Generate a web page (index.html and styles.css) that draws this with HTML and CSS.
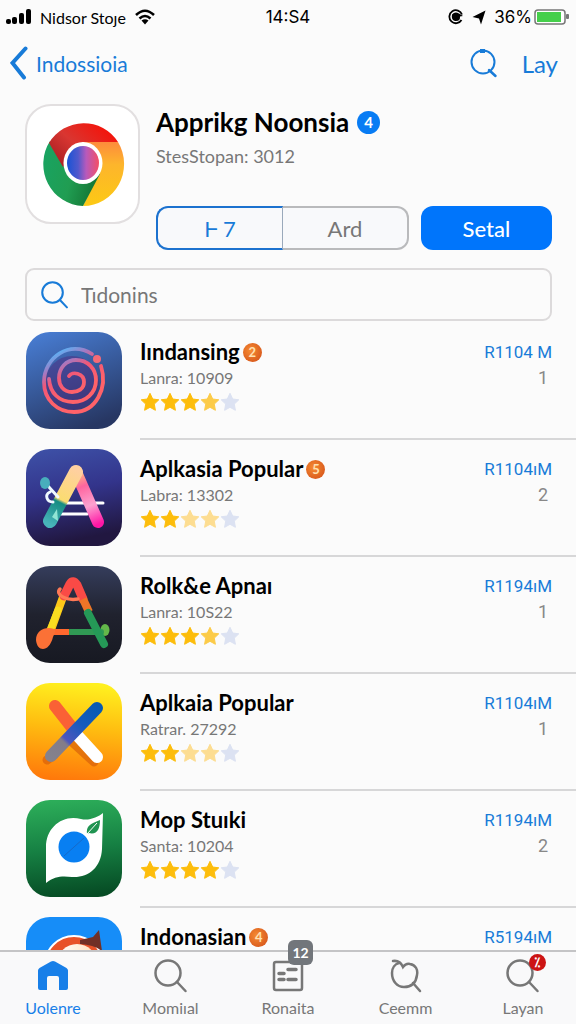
FILE: index.html
```html
<!DOCTYPE html>
<html lang="id">

<head>
  <meta charset="UTF-8" />
  <meta name="viewport" content="width=device-width, initial-scale=1.0" />
  <title>Indossioia</title>
  <link rel="stylesheet" href="styles.css">
</head>

<body>
  <!-- shared shapes -->
  <svg class="defs" aria-hidden="true">
    <symbol id="star" viewBox="0 0 20 20">
      <path d="M10 1.3l2.7 5.7 6.1.8-4.5 4.3 1.1 6.2-5.4-3-5.4 3 1.1-6.2L1.2 7.800l6.100-.8z" fill="currentColor" stroke="currentColor" stroke-linejoin="round" />
    </symbol>
    <symbol id="search" viewBox="0 0 34 34">
      <g fill="none" stroke="currentColor" stroke-linecap="round">
        <circle cx="14" cy="14" r="12.500" />
        <path d="M23 23l8.500 9" />
      </g>
    </symbol>
  </svg>

  <div class="status-bar">
    <div class="status-left">
      <svg width="26" height="16" viewBox="0 0 26 16">
        <rect x="0" y="10" width="5" height="5" rx="2" />
        <rect x="6" y="8" width="5" height="7" rx="2" />
        <rect x="13" y="4" width="5" height="11" rx="2" />
        <rect x="20" y="0" width="5" height="15" rx="2" />
      </svg>
      <span class="carrier">Nidsor Stoȷe</span>
      <svg width="22" height="16" viewBox="0 0 22 16">
        <path d="M2 6Q11-2.500 20 6M5.500 9.500q5.500-5 11 0" fill="none" stroke="#000" stroke-width="2.600" />
        <path d="M7.500 11.500q3.500-2.500 7 0L11 15.500z" />
      </svg>
    </div>
    <div class="time">14:S4</div>
    <div class="status-right">
      <svg width="16" height="16" viewBox="0 0 16 16">
        <path d="M13.500 11A6.500 6.500 0 1 1 14 5.500" fill="none" stroke="#000" stroke-width="1.800" />
        <path d="M4 5.500Q7 2 11 4.500L15 7l-3 .5q.5 5-5 4.500Q3 11 4 5.500z" />
      </svg>
      <svg width="14" height="15" viewBox="0 0 14 15">
        <path d="M13.500.5L9 14.500 7 8.500.5 7z" />
      </svg>
      <span>36%</span>
      <svg class="battery" width="36" height="16" viewBox="0 0 36 16">
        <rect x="1" y="1" width="30" height="14" rx="3" fill="#fff" stroke="#777" stroke-width="1.500" />
        <rect x="3" y="3" width="24" height="10" fill="#45cf4b" />
        <rect x="32" y="5" width="3" height="5" rx="1" fill="#777" />
      </svg>
    </div>
  </div>

  <header class="nav">
    <a class="back" href="#">
      <svg width="18" height="34" viewBox="0 0 18 34">
        <path d="M15.500 2.500L2.500 17 14 31.500" fill="none" stroke="currentColor" stroke-width="4" stroke-linecap="round" />
      </svg>
      Indossioia
    </a>
    <div class="nav-actions">
      <button type="button" class="icon-button" aria-label="Search">
        <svg width="28" height="30" viewBox="0 0 28 30">
          <g fill="none" stroke="currentColor" stroke-width="2">
            <circle cx="13" cy="14" r="11.500" />
            <path d="M19 22l6.500 6" stroke-linecap="round" stroke-width="2.500" />
          </g>
          <path d="M10 1h5v4h-5z" fill="currentColor" />
        </svg>
      </button>
      <a href="#">Lay</a>
    </div>
  </header>

  <main>
    <section class="hero">
      <div class="hero-icon">
        <svg width="84" height="86" viewBox="0 0 84 86">
          <defs>
            <linearGradient id="heroRed" x1="0" y1="1" x2="1" y2="0.300">
              <stop offset="0" stop-color="#9c1a20" />
              <stop offset="0.500" stop-color="#d93631" />
              <stop offset="1" stop-color="#f51209" />
            </linearGradient>
            <linearGradient id="heroYellow" x1="0" y1="0" x2="0" y2="1">
              <stop offset="0" stop-color="#fd8b3c" />
              <stop offset="0.350" stop-color="#fdb52c" />
              <stop offset="1" stop-color="#fcc914" />
            </linearGradient>
            <linearGradient id="heroGreen" x1="0" y1="0" x2="1" y2="0.300">
              <stop offset="0" stop-color="#18a463" />
              <stop offset="0.600" stop-color="#209d52" />
              <stop offset="1" stop-color="#157937" />
            </linearGradient>
            <linearGradient id="heroCore">
              <stop offset="0" stop-color="#1953d5" />
              <stop offset="0.350" stop-color="#5159cc" />
              <stop offset="0.600" stop-color="#b75abc" />
              <stop offset="1" stop-color="#f54f65" />
            </linearGradient>
          </defs>
          <path d="M42 21h35a41 42 0 0 1-35 64L57 53z" fill="url(#heroYellow)" />
          <path d="M9 20A41 42 0 0 0 42 85L59 53 24 46z" fill="url(#heroGreen)" />
          <path d="M8 22A41 42 0 0 1 77 21H42L22 46z" fill="url(#heroRed)" />
          <ellipse cx="42" cy="42" rx="19.500" ry="21" fill="#fff" />
          <ellipse cx="42" cy="42" rx="16" ry="17" fill="url(#heroCore)" />
        </svg>
      </div>
      <div class="hero-body">
        <h1>Apprikg Noonsia <span class="count">4</span></h1>
        <p class="hero-sub">StesStopan: 3012</p>
        <div class="hero-actions">
          <div class="segment">
            <button type="button" class="segment-item active">Ⱶ 7</button>
            <button type="button" class="segment-item">Ard</button>
          </div>
          <button type="button" class="primary">Setal</button>
        </div>
      </div>
    </section>

    <label class="search-box">
      <svg class="search-icon"><use href="#search" /></svg>
      <input type="search" placeholder="Tıdonins" aria-label="Tidonins" />
    </label>

    <ul class="app-list">
      <li class="app">
        <svg class="app-icon" viewBox="0 0 96 97">
          <defs>
            <linearGradient id="bg1" x1="0.200" y1="0" x2="0.600" y2="1">
              <stop offset="0" stop-color="#477bd0" />
              <stop offset="1" stop-color="#273763" />
            </linearGradient>
            <linearGradient id="swirl" gradientUnits="userSpaceOnUse" x1="26" y1="22" x2="48" y2="62">
              <stop offset="0" stop-color="#58b4f7" />
              <stop offset="0.300" stop-color="#a678c0" />
              <stop offset="0.550" stop-color="#f05878" />
              <stop offset="1" stop-color="#ff6269" />
            </linearGradient>
          </defs>
          <rect width="96" height="97" rx="24" fill="url(#bg1)" />
          <circle cx="46" cy="51" r="27" fill="#50257c" opacity="0.450" />
          <g fill="none" stroke="url(#swirl)" stroke-width="3.800" stroke-linecap="round">
            <path d="M66 22C44 8 18 25 18 50c0 18 13 30 30 30 22 0 34-24 27-46" />
            <path d="M43 44C46 39 58 41 58 50C58 57 52 60 46 60C37 60 33 53 33 46C33 36 40 28 50 28C62 28 70 37 70 48C70 61 60 70 47 70C33 70 24 61 23 47" />
          </g>
          <circle cx="71" cy="27" r="4" fill="#f56a76" />
        </svg>
        <div class="app-body">
          <div class="app-info">
            <h2>Iındansing <span class="medal">2</span></h2>
            <p>Lanra: 10909</p>
            <div class="stars" role="img" aria-label="4 / 5">
              <svg class="full"><use href="#star" /></svg><svg class="full"><use href="#star" /></svg><svg class="full"><use href="#star" /></svg><svg class="most"><use href="#star" /></svg><svg class="none"><use href="#star" /></svg>
            </div>
          </div>
          <div class="app-side"><a href="#">R1104 M</a><span>1</span></div>
        </div>
      </li>

      <li class="app">
        <svg class="app-icon" viewBox="0 0 96 97">
          <defs>
            <linearGradient id="bg2" x1="0" y1="0" x2="0.200" y2="1">
              <stop offset="0" stop-color="#3e52a8" />
              <stop offset="0.500" stop-color="#33348b" />
              <stop offset="1" stop-color="#211740" />
            </linearGradient>
            <linearGradient id="legLeft" gradientUnits="userSpaceOnUse" x1="50" y1="21" x2="23" y2="75">
              <stop offset="0" stop-color="#ffd0a0" />
              <stop offset="0.550" stop-color="#fadc70" />
              <stop offset="0.600" stop-color="#168c82" />
              <stop offset="1" stop-color="#48b5ba" />
            </linearGradient>
            <linearGradient id="legRight" gradientUnits="userSpaceOnUse" x1="50" y1="21" x2="73" y2="75">
              <stop offset="0" stop-color="#ffd079" />
              <stop offset="0.300" stop-color="#ff659f" />
              <stop offset="0.650" stop-color="#fca2d0" />
              <stop offset="1" stop-color="#ff16a5" />
            </linearGradient>
          </defs>
          <rect width="96" height="97" rx="24" fill="url(#bg2)" />
          <g fill="none" stroke-linecap="round">
            <path d="M37 54h40M35 65h26" stroke="#fff" stroke-width="3" />
            <path d="M50 23l22 50" stroke="url(#legRight)" stroke-width="12" />
            <path d="M50 23L24 72" stroke="url(#legLeft)" stroke-width="14" />
            <path d="M22 37l10 11M24 43c-6 3-3 10 3 10" stroke="#eff9ff" stroke-width="3" />
          </g>
          <ellipse cx="19" cy="34" rx="5" ry="6" fill="#48aebc" />
          <path d="M31 60l1 12-6-4z" fill="#91e5d4" />
        </svg>
        <div class="app-body">
          <div class="app-info">
            <h2>Aplkasia Popular <span class="medal">5</span></h2>
            <p>Labra: 13302</p>
            <div class="stars" role="img" aria-label="2 / 5">
              <svg class="full"><use href="#star" /></svg><svg class="full"><use href="#star" /></svg><svg class="pale"><use href="#star" /></svg><svg class="pale"><use href="#star" /></svg><svg class="none"><use href="#star" /></svg>
            </div>
          </div>
          <div class="app-side"><a href="#">R1104ıM</a><span>2</span></div>
        </div>
      </li>

      <li class="app">
        <svg class="app-icon" viewBox="0 0 96 97">
          <defs>
            <linearGradient id="bg3" x1="0" y1="0" x2="0" y2="1">
              <stop offset="0" stop-color="#353d5c" />
              <stop offset="0.500" stop-color="#20222e" />
              <stop offset="1" stop-color="#171922" />
            </linearGradient>
          </defs>
          <rect width="96" height="97" rx="24" fill="url(#bg3)" />
          <g fill="none" stroke-linecap="round" stroke-linejoin="round">
            <path d="M37 31L25 64" stroke="#fdc719" stroke-width="8" />
            <path d="M32 44l-8 20" stroke="#f9dd20" stroke-width="7" />
            <path d="M38 30l6-12q3-5 7 1l6 14" stroke="#fa4a46" stroke-width="9" />
            <path d="M57 33l6 13" stroke="#ef7527" stroke-width="8" stroke-linecap="butt" />
            <ellipse cx="79" cy="64" rx="4.500" ry="6" fill="#64b84a" />
            <path d="M44 66h31" stroke="#309954" stroke-width="6" />
            <path d="M62 47l16 31" stroke="#259957" stroke-width="8" />
            <path d="M25 66h18" stroke="#ff682e" stroke-width="6" stroke-linecap="butt" />
            <path d="M34 23c-5 5 5 12 18 10" stroke="#ff7956" stroke-width="3.500" />
          </g>
          <path d="M10 74c0-10 10-14 18-11 3 2 0 5-1 8-4 16-16 15-17 3z" fill="#fb7136" />
        </svg>
        <div class="app-body">
          <div class="app-info">
            <h2>Rolk&amp;e Apnaı</h2>
            <p>Lanra: 10S22</p>
            <div class="stars" role="img" aria-label="4 / 5">
              <svg class="full"><use href="#star" /></svg><svg class="full"><use href="#star" /></svg><svg class="full"><use href="#star" /></svg><svg class="most"><use href="#star" /></svg><svg class="none"><use href="#star" /></svg>
            </div>
          </div>
          <div class="app-side"><a href="#">R1194ıM</a><span>1</span></div>
        </div>
      </li>

      <li class="app">
        <svg class="app-icon" viewBox="0 0 96 97">
          <defs>
            <linearGradient id="bg4" x1="0.500" y1="0" x2="0.400" y2="1">
              <stop offset="0" stop-color="#fff01f" />
              <stop offset="0.450" stop-color="#ffbd10" />
              <stop offset="1" stop-color="#ff790b" />
            </linearGradient>
            <linearGradient id="blueStick" gradientUnits="userSpaceOnUse" x1="73" y1="23" x2="23" y2="75">
              <stop offset="0" stop-color="#075ab2" />
              <stop offset="0.350" stop-color="#155bbd" />
              <stop offset="0.650" stop-color="#4c56bd" />
              <stop offset="0.700" stop-color="#837c89" />
              <stop offset="1" stop-color="#84828d" />
            </linearGradient>
          </defs>
          <rect width="96" height="97" rx="24" fill="url(#bg4)" />
          <g fill="none" stroke-linecap="round">
            <path d="M46 59l22 20M21 77l7-5" stroke="#d65c0b" stroke-width="9" opacity="0.650" />
            <path d="M29 23l22 28" stroke="#fa6135" stroke-width="12" />
            <path d="M50 51l21 23" stroke="#fff" stroke-width="12" />
            <path d="M71 25L25 73" stroke="url(#blueStick)" stroke-width="12" />
          </g>
        </svg>
        <div class="app-body">
          <div class="app-info">
            <h2>Aplkaia Popular</h2>
            <p>Ratrar. 27292</p>
            <div class="stars" role="img" aria-label="2 / 5">
              <svg class="full"><use href="#star" /></svg><svg class="full"><use href="#star" /></svg><svg class="pale"><use href="#star" /></svg><svg class="pale"><use href="#star" /></svg><svg class="none"><use href="#star" /></svg>
            </div>
          </div>
          <div class="app-side"><a href="#">R1104ıM</a><span>1</span></div>
        </div>
      </li>

      <li class="app">
        <svg class="app-icon" viewBox="0 0 96 97">
          <defs>
            <linearGradient id="bg5" x1="0.400" y1="0" x2="0.500" y2="1">
              <stop offset="0" stop-color="#2cad59" />
              <stop offset="0.500" stop-color="#168043" />
              <stop offset="1" stop-color="#064b24" />
            </linearGradient>
          </defs>
          <rect width="96" height="97" rx="24" fill="url(#bg5)" />
          <path d="M20 83V47c0-20 17-33 35-28 8 2 17-2 22-6l-1 36c-1 19-14 29-30 28-10-1-17-1-26 6z" fill="#fff" />
          <path d="M61 34c-1-8 3-10 13-14 0 9-3 15-11 13z" fill="#209451" />
          <path d="M61 34l10-11" stroke="#fff" />
          <circle cx="48" cy="47" r="15.500" fill="#087ff2" />
          <path d="M38 56l20-18" stroke="#1769c8" />
        </svg>
        <div class="app-body">
          <div class="app-info">
            <h2>Mop Stuıki</h2>
            <p>Santa: 10204</p>
            <div class="stars" role="img" aria-label="4 / 5">
              <svg class="full"><use href="#star" /></svg><svg class="full"><use href="#star" /></svg><svg class="full"><use href="#star" /></svg><svg class="full"><use href="#star" /></svg><svg class="none"><use href="#star" /></svg>
            </div>
          </div>
          <div class="app-side"><a href="#">R1194ıM</a><span>2</span></div>
        </div>
      </li>

      <li class="app">
        <svg class="app-icon" viewBox="0 0 96 97">
          <defs>
            <linearGradient id="fur">
              <stop offset="0" stop-color="#fff" />
              <stop offset="1" stop-color="#ffe0bb" />
            </linearGradient>
          </defs>
          <rect width="96" height="97" rx="24" fill="#168df8" />
          <circle cx="48" cy="48" r="29" fill="#e85228" stroke="#fff" stroke-width="2" />
          <path d="M54 23l13-3 6-7 3 21q-7-6-22-7z" fill="#713026" />
          <ellipse cx="51" cy="47" rx="20" ry="20" fill="url(#fur)" />
        </svg>
        <div class="app-body">
          <div class="app-info">
            <h2>Indonasian <span class="medal">4</span></h2>
          </div>
          <div class="app-side"><a href="#">R5194ıM</a></div>
        </div>
      </li>
    </ul>
  </main>

  <nav class="tab-bar">
    <a class="tab active" href="#">
      <svg width="34" height="34" viewBox="0 0 34 34">
        <path d="M2 11.500Q2 10 3.500 9L15 2.500q2-1 4 0L30.500 9Q32 10 32 11.500V29q0 2-2 2h-7V19q0-2-2-2h-8q-2 0-2 2v12H4q-2 0-2-2z" fill="currentColor" />
      </svg>
      Uolenre
    </a>
    <a class="tab" href="#">
      <svg width="34" height="34" stroke-width="2.500"><use href="#search" /></svg>
      Momiıal
    </a>
    <a class="tab" href="#">
      <svg width="34" height="34" viewBox="0 0 34 34">
        <rect x="3" y="3" width="28" height="28" rx="2" fill="none" stroke="currentColor" stroke-width="2.500" />
        <path d="M17 10.500h8M8 14.500h5M8 20.500h5M17 20.500h8" stroke="currentColor" stroke-width="3.500" stroke-linecap="round" />
      </svg>
      Ronaita
      <span class="badge badge-grey">12</span>
    </a>
    <a class="tab" href="#">
      <svg width="34" height="34" viewBox="0 0 34 34">
        <g fill="none" stroke="currentColor" stroke-width="2.500" stroke-linecap="round">
          <path d="M4 2q7-1 10 6 3-4 7-3c6 1 8 6 7 11-1 8-6 12-13 12S3 22 3 14C3 9 6 5 10 4" />
          <path d="M24 24l7 8" />
        </g>
      </svg>
      Ceemm
    </a>
    <a class="tab" href="#">
      <svg width="34" height="34" stroke-width="2.500"><use href="#search" /></svg>
      Layan
      <span class="badge badge-red">⁒</span>
    </a>
  </nav>
</body>

</html>
```

FILE: styles.css
```css
* {
  box-sizing: border-box;
}

body {
  margin: 0;
  height: 100vh;
  display: flex;
  flex-direction: column;
  overflow: hidden;
  background: #fbfbfb;
  color: #000;
  font-family: Lato, "Liberation Sans", sans-serif;
}

h1, h2, p, ul {
  margin: 0;
  padding: 0;
}

a {
  color: #187bd8;
  text-decoration: none;
}

button, input {
  font-family: inherit;
}

button {
  cursor: pointer;
}

svg {
  display: block;
  flex: none;
}

.defs {
  position: absolute;
  width: 0;
  height: 0;
}

/* status bar */

.status-bar {
  display: grid;
  grid-template-columns: 1fr auto 1fr;
  align-items: center;
  height: 34px;
  padding: 0 6px;
  font-size: 16px;
}

.status-left,
.status-right {
  display: flex;
  align-items: center;
  gap: 8px;
}

.status-right {
  justify-content: flex-end;
}

.time,
.status-right {
  font-family: Inter, sans-serif;
  font-size: 17px;
}

.battery {
  margin-left: -6px;
}

/* navigation */

.nav {
  display: flex;
  justify-content: space-between;
  align-items: center;
  height: 58px;
  padding: 0 18px 0 10px;
  font-size: 21px;
}

.back {
  display: flex;
  align-items: center;
  gap: 8px;
}

.nav-actions {
  display: flex;
  align-items: center;
  gap: 24px;
  font-size: 24px;
}

.icon-button {
  padding: 0;
  border: none;
  background: none;
  color: #187bd8;
}

main {
  flex: 1;
  min-height: 0;
  overflow-y: auto;
  scrollbar-width: none;
}

/* app header */

.hero {
  display: flex;
  gap: 16px;
  padding: 12px 24px 18px 25px;
}

.hero-icon {
  display: flex;
  align-items: center;
  justify-content: center;
  width: 115px;
  height: 120px;
  border: 2px solid #e2dfe0;
  border-radius: 26px;
  background: #fff;
}

.hero-body {
  flex: 1;
}

h1 {
  display: flex;
  align-items: center;
  gap: 8px;
  height: 36px;
  font-size: 26px;
  font-weight: 700;
}

.count {
  width: 23px;
  height: 23px;
  border-radius: 50%;
  background: #087cf4;
  color: #fff;
  font-size: 15px;
  line-height: 23px;
  text-align: center;
}

.hero-sub {
  color: #777;
  font-size: 18px;
  line-height: 32px;
}

.hero-actions {
  display: grid;
  grid-template-columns: 27fr 14fr;
  gap: 12px;
  margin-top: 34px;
}

.segment {
  display: flex;
}

.segment-item {
  flex: 1;
  height: 44px;
  border: 2px solid #b9babc;
  border-left: none;
  border-radius: 0 12px 12px 0;
  background: #f8f9fb;
  color: #777;
  font-size: 22px;
}

.segment-item.active {
  border: 2px solid #1c72cf;
  border-right: 1px solid #9aa9bb;
  border-radius: 12px 0 0 12px;
  color: #187bd8;
}

.primary {
  height: 44px;
  border: none;
  border-radius: 12px;
  background: #0075fb;
  color: #fff;
  font-size: 22px;
  font-weight: 500;
}

/* search */

.search-box {
  display: flex;
  align-items: center;
  gap: 12px;
  height: 53px;
  margin: 0 24px 2px 25px;
  padding: 0 14px;
  border: 2px solid #dcdadb;
  border-radius: 9px;
}

.search-icon {
  width: 28px;
  height: 28px;
  color: #187bd8;
  stroke-width: 2.5px;
}

.search-box input {
  flex: 1;
  min-width: 0;
  padding: 0;
  border: none;
  outline: none;
  background: none;
  font-size: 21px;
}

.search-box input::placeholder {
  color: #777;
  opacity: 1;
}

/* list */

.app-list {
  list-style: none;
}

.app {
  display: flex;
  gap: 18px;
  padding-left: 26px;
}

.app-icon {
  width: 96px;
  height: 97px;
  margin: 9px 0 11px;
}

.app-body {
  display: flex;
  flex: 1;
  justify-content: space-between;
  padding: 15px 24px 0 0;
  border-bottom: 2px solid #d7d7d8;
}

h2 {
  display: flex;
  align-items: center;
  gap: 3px;
  font-size: 22px;
  font-weight: 700;
  line-height: 28px;
}

.medal {
  width: 19px;
  height: 19px;
  border-radius: 50%;
  background: radial-gradient(circle at 40% 40%, #f68b32, #d04b16);
  color: #ffe0b0;
  font-size: 13px;
  line-height: 19px;
  text-align: center;
}

.app-info p {
  color: #777;
  font-size: 16px;
  line-height: 24px;
}

.stars {
  display: flex;
  align-items: center;
  height: 24px;
}

.stars svg {
  width: 20px;
  height: 20px;
}

.full {
  color: #fdbd0b;
}

.most {
  color: #fccb48;
}

.pale {
  color: #fddd91;
}

.none {
  color: #dce2f2;
}

.app-side {
  display: flex;
  flex-direction: column;
  align-items: flex-end;
  font-family: Roboto, sans-serif;
  font-size: 17px;
  line-height: 28px;
}

.app-side span {
  padding-right: 4px;
  color: #888;
  font-size: 18px;
  line-height: 24px;
}

/* bottom tabs */

.tab-bar {
  display: flex;
  justify-content: space-between;
  height: 74px;
  padding: 7px 20px 0;
  border-top: 2px solid #c4c4c6;
  background: #f9f9fa;
}

.tab {
  position: relative;
  display: flex;
  flex-direction: column;
  align-items: center;
  width: 66px;
  color: #777;
  font-size: 16px;
  line-height: 30px;
}

.tab.active {
  color: #187fe8;
}

.badge {
  position: absolute;
  color: #fff;
  font-weight: 700;
  text-align: center;
}

.badge-grey {
  top: -19px;
  right: 8px;
  width: 25px;
  height: 25px;
  border-radius: 6px;
  background: #72767b;
  font-size: 14px;
  line-height: 25px;
}

.badge-red {
  top: -5px;
  right: 10px;
  width: 17px;
  height: 17px;
  border-radius: 50%;
  background: #cc1414;
  font-size: 13px;
  line-height: 17px;
}
```
